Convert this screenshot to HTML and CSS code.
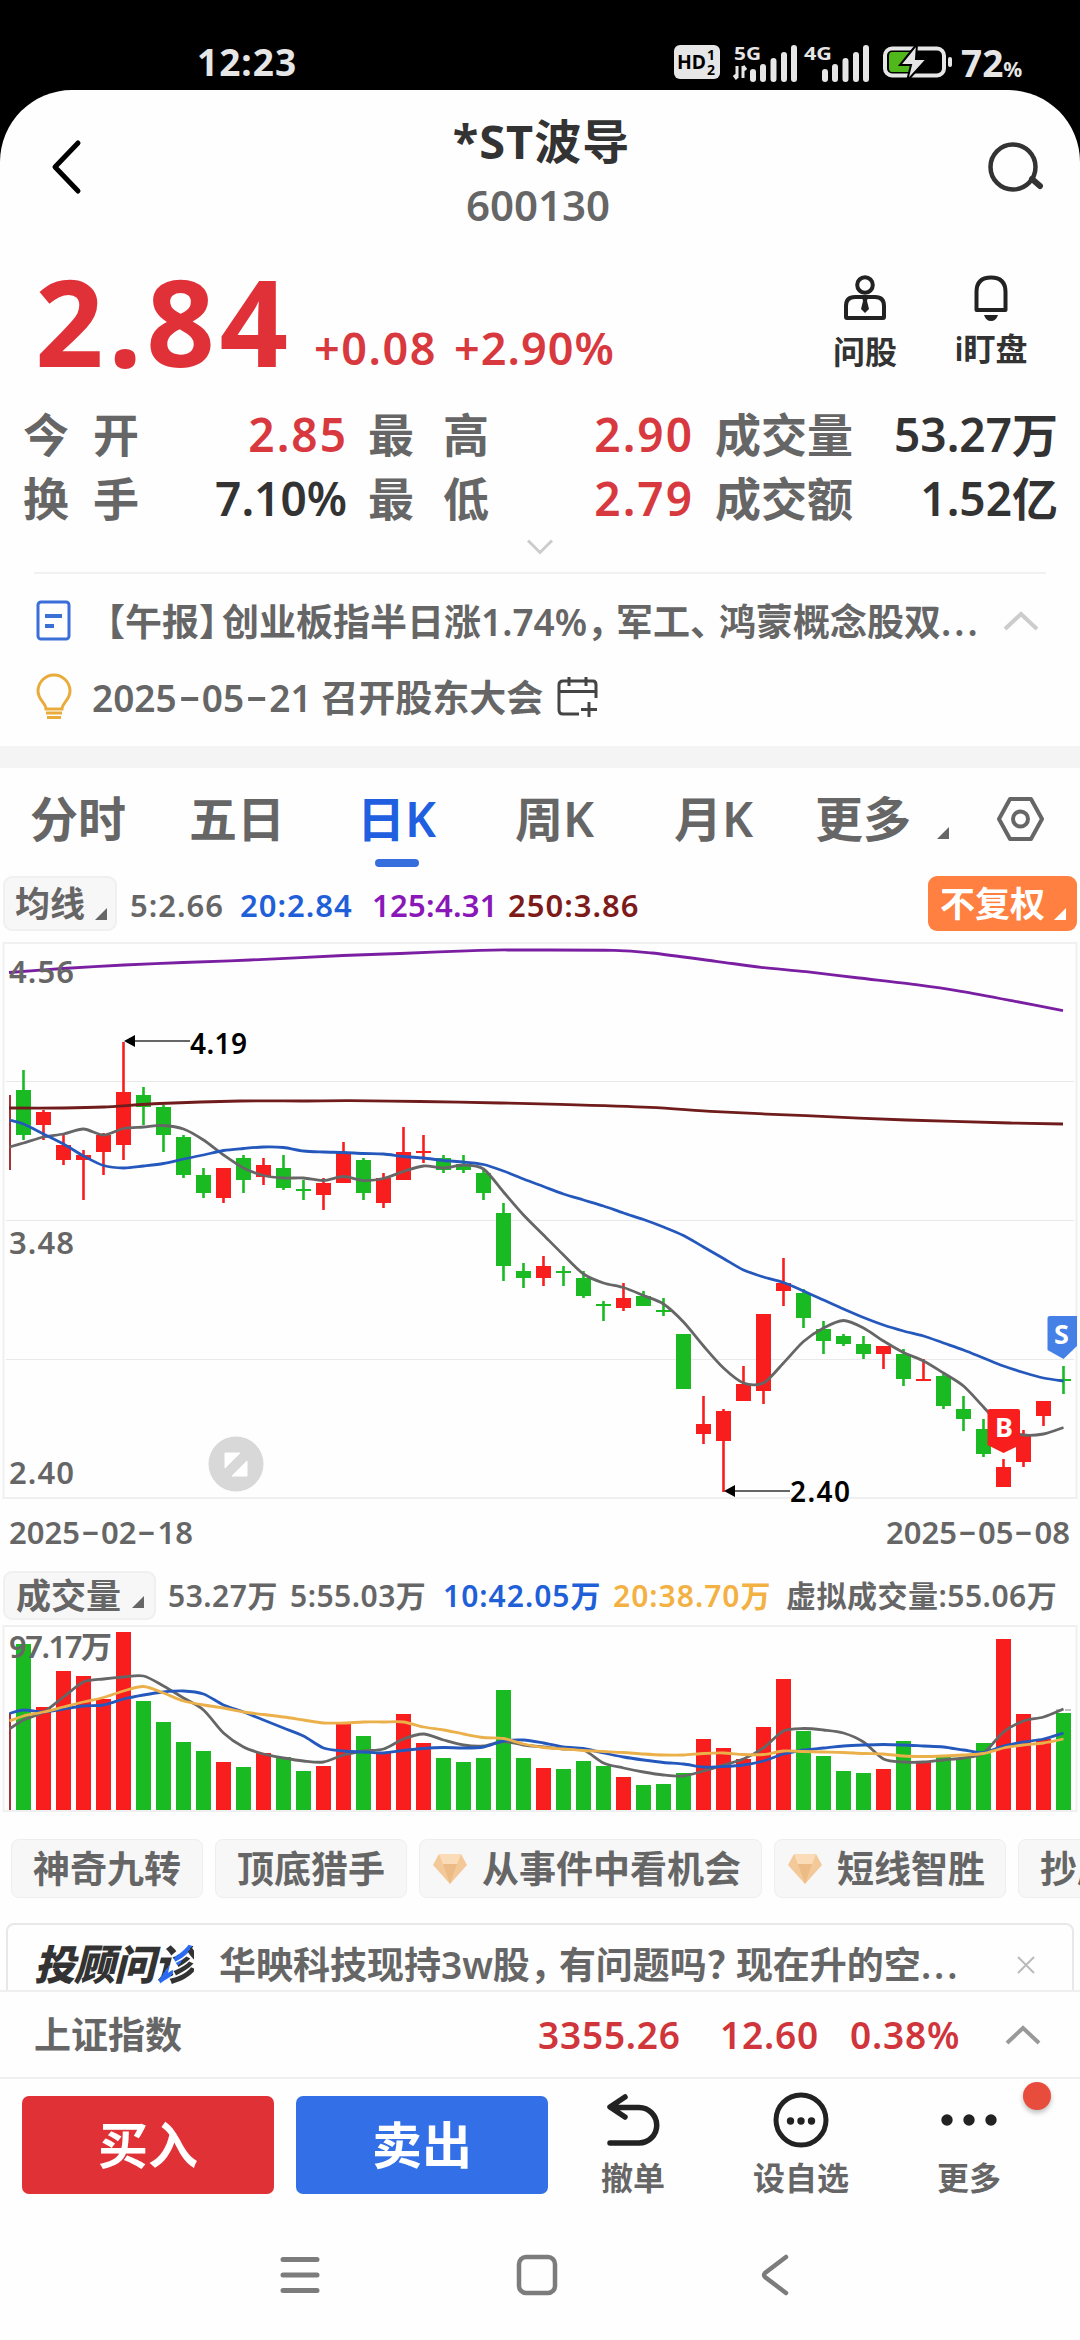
FILE: index.html
```html
<!DOCTYPE html>
<html lang="zh-CN">
<head>
    <meta charset="UTF-8">
    <meta name="viewport" content="width=device-width, initial-scale=1.0">
    <title>*ST波导 600130</title>
    <link rel="stylesheet" href="styles.css">
</head>
<body>
    <div class="status-bar">
        <span class="time">12:23</span>
        <div class="status-icons">
            <svg class="hd" width="46" height="34" viewBox="0 0 46 34">
                <rect width="46" height="34" rx="6" fill="#e6e6e6"/>
                <text x="3" y="24" font-size="20" textLength="29" lengthAdjust="spacingAndGlyphs">HD</text>
                <text x="33" y="15" font-size="14">1</text>
                <text x="33" y="30" font-size="14">2</text>
            </svg>
            <svg class="signal" width="66" height="36" viewBox="0 0 66 36">
                <text x="0" y="16" font-size="18" textLength="27" lengthAdjust="spacingAndGlyphs">5G</text>
                <path d="M3 22v12M0 31l3 4M9 34V22M12 26l-3-4" stroke="#e6e6e6" stroke-width="3" fill="none"/>
                <path d="M19 35v-7M29 35V23M39.500 35V17M50 35V11M60 35V4" stroke="#e6e6e6" stroke-width="6" stroke-linecap="round"/>
            </svg>
            <svg class="signal second" width="66" height="36" viewBox="0 0 66 36">
                <text x="0" y="16" font-size="18" textLength="28" lengthAdjust="spacingAndGlyphs">4G</text>
                <path d="M21 35v-7M31 35V23M41.500 35V17M52 35V11M62 35V4" stroke="#e6e6e6" stroke-width="6" stroke-linecap="round"/>
            </svg>
            <svg class="battery" width="70" height="34" viewBox="0 0 70 34">
                <rect x="2" y="3.500" width="59" height="27" rx="7" fill="none" stroke="#e6e6e6" stroke-width="4"/>
                <path d="M9 7h21v20H9q-3 0-3-4V11q0-4 3-4z" fill="#51b81c"/>
                <rect x="65" y="12" width="4" height="10" rx="2" fill="#e6e6e6"/>
                <path d="M34 -1L17 20h11l-4 16L44 14H33z" fill="#e6e6e6" stroke="#000" stroke-width="2"/>
            </svg>
            <span class="percent">72<small>%</small></span>
        </div>
    </div>

    <main class="page">
        <header class="header">
            <svg width="30" height="56" viewBox="0 0 30 56"><path d="M27 4L4 28l23 24" fill="none" stroke="#000" stroke-width="5" stroke-linecap="round" stroke-linejoin="round"/></svg>
            <div class="title">
                <h1>*ST波导</h1>
                <p>600130</p>
            </div>
            <svg width="58" height="56" viewBox="0 0 58 56"><circle cx="26" cy="28" r="22.500" fill="none" stroke="#333" stroke-width="4.500"/><path d="M45 40l8 7" stroke="#333" stroke-width="6" stroke-linecap="round"/></svg>
        </header>

        <section class="quote">
            <span class="price">2.84</span>
            <span class="change">+0.08</span>
            <span class="change rate">+2.90%</span>
            <div class="quote-tools">
                <div class="tool">
                    <svg width="44" height="46" viewBox="0 0 44 46" fill="none" stroke="#222" stroke-width="4">
                        <circle cx="22" cy="10" r="7.800"/>
                        <path d="M3 42V31q0-9 9-9h20q9 0 9 9v11q0 1-1 1H4q-1 0-1-1z"/>
                        <path d="M19 22h6l-1 4 2 8-4 4-4-4 2-8z" fill="#222" stroke="none"/>
                    </svg>
                    <span>问股</span>
                </div>
                <div class="tool tool-bell">
                    <svg width="44" height="46" viewBox="0 0 44 46" fill="none" stroke="#222" stroke-width="4">
                        <path d="M7.500 35V17q0-14.500 14.500-14.500T36.500 17v18z" stroke-linejoin="round"/>
                        <path d="M15 40h14q-2 6-7 6t-7-6z" fill="#222" stroke="none"/>
                    </svg>
                    <span>i盯盘</span>
                </div>
            </div>
        </section>

        <section class="stats">
            <div class="label"><i>今</i><i>开</i></div><b class="up">2.85</b>
            <div class="label"><i>最</i><i>高</i></div><b class="up">2.90</b>
            <div class="label"><i>成</i><i>交</i><i>量</i></div><b>53.27万</b>
            <div class="label"><i>换</i><i>手</i></div><b>7.10%</b>
            <div class="label"><i>最</i><i>低</i></div><b class="up">2.79</b>
            <div class="label"><i>成</i><i>交</i><i>额</i></div><b>1.52亿</b>
        </section>
        <div class="expand">
            <svg width="28" height="18" viewBox="0 0 28 18"><path d="M2 2.500l12 12 12-12" fill="none" stroke="#ccc" stroke-width="3"/></svg>
        </div>

        <section class="news">
            <div class="news-row">
                <svg width="36" height="42" viewBox="0 0 36 42" fill="none" stroke="#3a6fd8" stroke-width="3"><rect x="2" y="2" width="31" height="37" rx="3"/><path d="M9 16h17M9 26h9" stroke-width="4"/></svg>
                <p class="headline">【午报<span class="tight bracket">】</span>创业板指半日涨1.74%<span class="tight">，</span>军工<span class="tight">、</span>鸿蒙概念股双<span class="dots">...</span></p>
                <svg class="up-arrow" width="36" height="22" viewBox="0 0 36 22"><path d="M2 19L18 4l16 15" fill="none" stroke="#ccc" stroke-width="4"/></svg>
            </div>
            <div class="news-row">
                <svg width="36" height="46" viewBox="0 0 36 46" fill="none" stroke="#e9ac3c" stroke-width="3"><path d="M10 35c0-6-8-9-8-18a16 16 0 0 1 32 0c0 9-8 12-8 18z"/><path d="M10 39h16M11 43.500h14"/></svg>
                <p class="event">2025<i class="dash">-</i>05<i class="dash">-</i>21 召开股东大会</p>
                <svg width="42" height="42" viewBox="0 0 42 42" fill="none" stroke="#444" stroke-width="3"><path d="M22 38H6q-4 0-4-4V9q0-4 4-4h30q3 0 3 4v13M2 15.500h37M12 1v9M29 1v9M32 26v15M24 33.500h16"/></svg>
            </div>
        </section>

        <nav class="tabs">
            <span>分时</span>
            <span>五日</span>
            <span class="active">日K</span>
            <span>周K</span>
            <span>月K</span>
            <span>更多</span>
            <em class="corner"></em>
            <svg width="50" height="46" viewBox="0 0 50 46" fill="none" stroke="#666" stroke-width="4"><path d="M14 3h21l11 20-11 20H14L3 23z" stroke-linejoin="round"/><circle cx="24.500" cy="23" r="7.500"/></svg>
        </nav>

        <div class="legend ma-legend">
            <span class="chip">均线<em class="corner"></em></span>
            <span>5:2.66</span>
            <span class="blue">20:2.84</span>
            <span class="purple">125:4.31</span>
            <span class="brown">250:3.86</span>
            <span class="adjust">不复权<em class="corner"></em></span>
        </div>

        <div class="chart-wrap">
            <svg id="kline" class="chart" width="1080" height="570" viewBox="0 0 1080 570"></svg>
            <svg class="zoom-btn" width="56" height="56" viewBox="0 0 56 56"><circle cx="28" cy="28" r="27.500" fill="#d8d8d8"/><path d="M17 17h15L17 32zM39 25v15H24z" fill="#fff" stroke="#fff" stroke-linejoin="round"/></svg>
        </div>
        <div class="dates">
            <span>2025<i class="dash">-</i>02<i class="dash">-</i>18</span>
            <span>2025<i class="dash">-</i>05<i class="dash">-</i>08</span>
        </div>

        <div class="legend vol-legend">
            <span class="chip">成交量<em class="corner"></em></span>
            <span>53.27万</span>
            <span>5:55.03万</span>
            <span class="blue">10:42.05万</span>
            <span class="yellow">20:38.70万</span>
            <span>虚拟成交量:55.06万</span>
        </div>
        <svg id="volume" class="chart" width="1080" height="194" viewBox="0 70 1080 194"></svg>

        <div class="strategies">
            <span>神奇九转</span>
            <span>顶底猎手</span>
            <span class="vip"><svg width="34" height="30" viewBox="0 0 34 30"><path d="M6 0h22l6 11-17 19L0 11z" fill="#f4c99a"/><path d="M6 0h22l-4 10H10z" fill="#fbdcb8"/><path d="M10 10h14l-7 20z" fill="#edbb86"/></svg>从事件中看机会</span>
            <span class="vip"><svg width="34" height="30" viewBox="0 0 34 30"><path d="M6 0h22l6 11-17 19L0 11z" fill="#f4c99a"/><path d="M6 0h22l-4 10H10z" fill="#fbdcb8"/><path d="M10 10h14l-7 20z" fill="#edbb86"/></svg>短线智胜</span>
            <span>抄底</span>
        </div>

        <div class="advisor">
            <div class="advisor-card">
                <strong>投顾问<span>诊</span></strong>
                <p>华映科技现持3w股<span class="tight">，</span>有问题吗<span class="tight">？</span>现在升的空<span class="dots">...</span></p>
                <svg width="20" height="20" viewBox="0 0 20 20"><path d="M2 2l16 16M18 2L2 18" stroke="#bbb" stroke-width="2"/></svg>
            </div>
        </div>

        <div class="index-row">
            <span class="name">上证指数</span>
            <b class="points">3355.26</b><b class="diff">12.60</b><b>0.38%</b>
            <svg width="36" height="22" viewBox="0 0 36 22"><path d="M2 19L18 4l16 15" fill="none" stroke="#999" stroke-width="4"/></svg>
        </div>

        <footer class="actions">
            <button class="buy">买入</button>
            <button class="sell">卖出</button>
            <div class="action">
                <svg width="56" height="56" viewBox="0 0 56 56" fill="none" stroke="#222" stroke-width="5.500" stroke-linecap="round" stroke-linejoin="round"><path d="M20 5L5 15l15 10M6 15.500h28a17.500 17.500 0 0 1 0 35.500H5"/></svg>
                <span>撤单</span>
            </div>
            <div class="action">
                <svg width="56" height="56" viewBox="0 0 56 56"><circle cx="28" cy="28" r="25" fill="none" stroke="#222" stroke-width="5"/><g fill="#222"><circle cx="17.500" cy="29" r="3.700"/><circle cx="28" cy="29" r="3.700"/><circle cx="38.500" cy="29" r="3.700"/></g></svg>
                <span>设自选</span>
            </div>
            <div class="action">
                <svg width="56" height="56" viewBox="0 0 56 56" fill="#222"><circle cx="6" cy="28" r="5.700"/><circle cx="28" cy="28" r="5.700"/><circle cx="50" cy="28" r="5.700"/></svg>
                <span>更多</span>
                <em class="badge"></em>
            </div>
        </footer>

        <div class="nav-bar">
            <svg width="40" height="44" viewBox="0 0 40 44"><path d="M3 6.500h34M3 22h34M3 37.500h34" stroke="#7c7c7c" stroke-width="5" stroke-linecap="round"/></svg>
            <svg width="44" height="44" viewBox="0 0 44 44"><rect x="4" y="4" width="36" height="36" rx="7" fill="none" stroke="#7c7c7c" stroke-width="4.500"/></svg>
            <svg width="30" height="44" viewBox="0 0 30 44"><path d="M26 4L5 20q-2 2 0 4l21 16" fill="none" stroke="#7c7c7c" stroke-width="4.500" stroke-linecap="round"/></svg>
        </div>
    </main>
    <script src="chart.js"></script>
</body>
</html>
```
FILE: styles.css
```css
* {
    box-sizing: border-box;
    margin: 0;
    padding: 0;
}
body {
    width: 1080px;
    height: 2340px;
    overflow: hidden;
    background: #000;
    color: #666;
    font-family: "Noto Sans", "Noto Sans CJK SC", sans-serif;
    font-weight: 600;
    font-size: 37px;
    line-height: 1;
}
svg {
    display: block;
    flex: none;
    overflow: visible;
}
i, em {
    font-style: normal;
}
.status-bar {
    display: flex;
    justify-content: space-between;
    height: 90px;
    padding: 34px 57px 0 197px;
    color: #e6e6e6;
}
.time {
    height: 56px;
    line-height: 56px;
    font-size: 37px;
    font-weight: 700;
    letter-spacing: 1px;
}
.status-icons {
    display: flex;
    align-items: center;
    height: 56px;
}
.status-icons text {
    font-weight: 700;
}
.signal {
    margin-left: 14px;
    fill: #e6e6e6;
}
.signal.second {
    margin-left: 4px;
}
.battery {
    margin-left: 13px;
}
.percent {
    width: 62px;
    margin-left: 8px;
    font-size: 37px;
    font-weight: 700;
    white-space: nowrap;
}
.percent small {
    font-size: 21px;
}
.page {
    height: 2250px;
    background: #fefefe;
    border-radius: 72px 72px 0 0;
}
.header {
    display: flex;
    justify-content: space-between;
    height: 154px;
    padding: 24px 35px 0 51px;
}
.header > svg {
    margin-top: 25px;
}
.title {
    text-align: center;
    margin-left: 8px;
}
.title h1 {
    height: 54px;
    line-height: 54px;
    margin-left: 7px;
    font-size: 47px;
    letter-spacing: 1px;
    color: #333;
}
.title p {
    height: 50px;
    line-height: 50px;
    margin-top: 12px;
    font-size: 42px;
}
.quote {
    display: flex;
    align-items: baseline;
    height: 158px;
    padding-left: 35px;
    color: #d8393e;
}
.price {
    width: 279px;
    font-size: 120px;
    line-height: 153px;
    font-weight: 700;
    letter-spacing: 4.5px;
    color: #e03138;
}
.change {
    position: relative;
    top: -2px;
    width: 140px;
    font-size: 45px;
    letter-spacing: 1.5px;
}
.change.rate {
    width: 379px;
    letter-spacing: 1px;
}
.quote-tools {
    display: flex;
    align-self: flex-start;
    gap: 56px;
    padding-top: 31px;
    color: #333;
    font-size: 32px;
}
.tool {
    display: flex;
    flex-direction: column;
    align-items: center;
    gap: 15px;
    width: 64px;
}
.tool-bell {
    width: 76px;
    gap: 12px;
}
.stats {
    display: grid;
    grid-template-columns: 116px 208px 142px 204px 160px 205px;
    grid-auto-rows: 64px;
    align-items: center;
    padding: 0 23px;
    font-size: 46px;
}
.stats .label {
    display: flex;
    justify-content: space-between;
}
.stats .label:nth-child(6n+3) {
    padding-left: 21px;
}
.stats .label:nth-child(6n+5) {
    padding-left: 22px;
}
.stats b {
    font-weight: 600;
    text-align: right;
    color: #333;
    white-space: nowrap;
}
.stats .up {
    margin-right: -1px;
    letter-spacing: 2px;
    color: #d8393e;
}
.expand {
    display: flex;
    justify-content: center;
    height: 44px;
    padding-top: 8px;
    margin: 0 34px;
    border-bottom: 2px solid #f1f1f1;
}
.news {
    height: 194px;
    padding: 9px 40px 0 36px;
    border-bottom: 22px solid #f4f4f4;
}
.news-row {
    display: flex;
    align-items: center;
    height: 76px;
    white-space: nowrap;
}
.headline {
    width: 885px;
    margin-left: 16px;
}
.tight {
    letter-spacing: -8px;
}
.bracket {
    letter-spacing: -14px;
}
.dots {
    letter-spacing: 3px;
}
.dash {
    display: inline-block;
    width: 0.68em;
    text-align: center;
    transform: translateY(-0.07em) scaleX(1.8);
}
.event {
    margin: 0 14px 0 20px;
}
.up-arrow {
    margin-left: 30px;
}
.tabs {
    display: flex;
    align-items: center;
    height: 102px;
    padding-left: 30px;
    font-size: 48px;
}
.tabs span {
    position: relative;
    width: 159px;
}
.tabs span:nth-child(2) {
    width: 168px;
}
.tabs span:nth-child(3) {
    width: 158px;
}
.tabs span:nth-child(5) {
    width: 141px;
}
.tabs span:nth-child(6) {
    width: 122px;
}
.tabs .active {
    color: #1f5fe0;
}
.tabs .active::after {
    content: "";
    position: absolute;
    left: 18px;
    top: 64px;
    width: 44px;
    height: 8px;
    border-radius: 4px;
    background: #366ede;
}
.corner {
    width: 0;
    height: 0;
    border-left: 12px solid transparent;
    border-bottom: 12px solid currentColor;
}
.tabs .corner {
    margin: 28px 47px 0 0;
}
.legend {
    display: flex;
    align-items: center;
    padding: 0 3px;
    font-size: 30px;
    letter-spacing: 0.5px;
    white-space: nowrap;
}
.chip, .adjust {
    display: flex;
    align-items: center;
    justify-content: space-between;
    border-radius: 9px;
    letter-spacing: 0;
}
.chip {
    background: #f7f7f7;
    border: 2px solid #f0f0f0;
    font-size: 35px;
}
.chip .corner, .adjust .corner {
    margin-top: 20px;
}
.ma-legend {
    height: 67px;
    align-items: flex-start;
    line-height: 58px;
    padding-top: 6px;
    font-size: 31px;
    letter-spacing: 1px;
}
.ma-legend span {
    width: 110px;
}
.ma-legend .blue {
    width: 132px;
}
.ma-legend .purple {
    width: 136px;
    letter-spacing: 0.3px;
}
.ma-legend .chip {
    width: 114px;
    height: 55px;
    padding: 0 8px 0 10px;
    margin-right: 13px;
    letter-spacing: 0;
}
.ma-legend .adjust {
    width: 149px;
    height: 55px;
    margin: 0 0 0 auto;
    padding: 0 11px 0 12px;
    background: #ff8040;
    color: #fff;
    font-size: 35px;
    letter-spacing: 0;
}
.blue {
    color: #1f5fd8;
}
.purple {
    color: #8a17b8;
}
.brown {
    color: #7d1a1a;
}
.yellow {
    color: #f3b144;
}
.chart-wrap {
    position: relative;
    height: 570px;
    margin-top: 3px;
}
.chart text {
    font-size: 31px;
    fill: #666;
}
.chart .mark {
    fill: #000;
    font-size: 28px;
}
.chart .flag {
    fill: #fff;
    font-size: 27px;
    font-weight: 700;
}
.frame {
    fill: none;
    stroke: #f0f0f0;
    stroke-width: 2;
}
.grid {
    stroke: #e9e9e9;
    stroke-width: 1;
}
.red {
    fill: #f91e1e;
}
.green {
    fill: #1abb22;
}
.line {
    fill: none;
    stroke-width: 2.8;
    stroke-linejoin: round;
}
.zoom-btn {
    position: absolute;
    left: 208px;
    top: 496px;
}
.dates {
    display: flex;
    justify-content: space-between;
    height: 61px;
    padding: 7px 10px 0 9px;
    font-size: 31px;
}
.vol-legend {
    height: 49px;
}
.vol-legend span {
    width: 122px;
}
.vol-legend span:nth-child(3) {
    width: 153px;
}
.vol-legend .blue {
    width: 170px;
    letter-spacing: 1px;
}
.vol-legend .yellow {
    width: 173px;
    letter-spacing: 1px;
}
.vol-legend .chip {
    width: 153px;
    height: 49px;
    padding: 0 10px 0 11px;
    margin-right: 12px;
}
.vol-legend .chip .corner {
    margin-top: 12px;
}
.strategies {
    display: flex;
    gap: 12px;
    height: 84px;
    padding: 25px 0 0 11px;
    overflow: hidden;
    white-space: nowrap;
}
.strategies span {
    display: flex;
    align-items: center;
    flex: none;
    height: 59px;
    padding: 0 21px;
    background: #f7f7f7;
    border: 1px solid #eee;
    border-radius: 8px;
}
.strategies .vip {
    gap: 15px;
    padding: 0 20px 0 13px;
}
.advisor {
    height: 92px;
    padding: 25px 6px 0;
    overflow: hidden;
}
.advisor-card {
    display: flex;
    align-items: center;
    height: 83px;
    padding: 0 36px 0 26px;
    border: 2px solid #e8e8e8;
    border-radius: 8px;
    white-space: nowrap;
}
.advisor-card strong {
    width: 185px;
    font-size: 41px;
    font-weight: 900;
    font-style: italic;
    letter-spacing: -1px;
    color: #333;
}
.advisor-card strong span {
    background: linear-gradient(125deg, #333 45%, #2a6af0 45%, #2a6af0 57%, #333 57%);
    -webkit-background-clip: text;
    background-clip: text;
    color: transparent;
}
.advisor-card svg {
    margin-left: auto;
}
.index-row {
    display: flex;
    align-items: center;
    height: 87px;
    padding: 0 39px 0 34px;
    border-top: 2px solid #efefef;
}
.index-row .name {
    width: 504px;
}
.index-row b {
    font-weight: 600;
    letter-spacing: 0.8px;
    color: #cf353b;
}
.index-row .points {
    width: 182px;
}
.index-row .diff {
    width: 130px;
}
.index-row svg {
    margin-left: auto;
}
.actions {
    display: flex;
    height: 119px;
    padding: 17px 0 0 22px;
    border-top: 2px solid #efefef;
}
.actions button {
    width: 252px;
    height: 98px;
    margin-right: 22px;
    border: none;
    border-radius: 7px;
    color: #fff;
    font: inherit;
    font-size: 50px;
    font-weight: 700;
}
.buy {
    background: #e03136;
}
.sell {
    background: #336fe6;
}
.action {
    position: relative;
    display: flex;
    flex-direction: column;
    align-items: center;
    gap: 14px;
    width: 168px;
    font-size: 32px;
    margin-top: -4px;
}
.action:nth-child(3) {
    margin-left: -21px;
}
.badge {
    position: absolute;
    right: 2px;
    top: -10px;
    width: 28px;
    height: 28px;
    border-radius: 50%;
    background: #e74c3c;
    box-shadow: 0 3px 5px rgba(0, 0, 0, 0.25);
}
.nav-bar {
    display: flex;
    height: 143px;
    padding: 57px 0 0 280px;
}
.nav-bar svg:nth-child(2) {
    margin: 0 201px 0 195px;
}
```
FILE: chart.js
```js
const RED = '#f91e1e', GREEN = '#1abb22';
const x = i => 23.5 + i * 20;

// colour, high, body top, body bottom, low
const candles = [
    ['g',130,150,195,200],['r',170,172,185,200],['r',193,205,220,225],['r',210,215,220,260],['r',193,195,212,235],
    ['r',102,152,205,220],['g',147,155,167,185],['g',165,167,195,212],['g',195,197,235,238],['g',228,235,253,258],
    ['r',228,228,258,263],['g',215,218,240,253],['r',218,225,237,245],['g',215,228,248,250],['g',240,249,251,260],
    ['r',238,243,255,270],['r',202,213,243,243],['g',218,220,253,260],['r',233,238,263,268],['r',187,212,240,240],
    ['r',195,211,213,223],['g',215,218,230,233],['g',215,224,230,233],['g',230,233,253,260],['g',263,273,326,341],
    ['g',323,331,338,348],['r',316,326,338,346],['g',326,331,333,346],['g',331,338,356,358],['g',361,364,366,381],
    ['r',343,358,368,371],['g',351,356,366,366],['g',358,370,372,376],['g',394,394,449,449],['r',456,484,494,504],
    ['r',469,471,501,552],['r',426,444,461,461],['r',374,374,451,464],['r',318,343,351,366],['g',349,353,378,388],
    ['g',381,389,401,414],['g',394,396,404,406],['g',396,404,414,419],['r',406,406,414,429],['g',409,414,439,446],
    ['r',419,439,441,441],['g',434,436,466,469],['g',456,469,479,491],['g',479,489,514,517],['r',519,527,547,547],
    ['r',490,495,522,527],['r',461,461,476,486],['g',426,439,441,454]
];
const volumes = [94,157,121,126,149,82,151,172,192,201,212,217,203,207,221,216,173,186,203,164,193,208,212,208,140,208,218,
    219,211,216,227,235,234,223,189,198,209,177,129,181,206,221,223,219,191,212,207,208,193,89,164,189,163];

const ma5 = [207,203,197,194,189,195,188.5,187,185.5,189,200,215,228,235.5,238,238,240.5,236.5,240.5,238.5,231.5,226,228,225,229,
    252,275,295,315,334,343,347.5,355.5,364,382,406,428,443,443,423,401.5,388,380.5,388,401,412.5,421,433,446,467,488,495,494,487.5];
const ma20 = [180,184,194,204,216,225.5,228,226,223.5,219,215,210.5,208.5,207,207.5,211,212,212.5,213.5,214,216.5,218,220.5,222,
    224.5,231,239,246.5,254,260,266,273,279.5,287,295.5,307,318.5,330,337,342.5,351,360,369,377.5,385,391,396,403,410,418,426,432.5,438,441];
const ma125 = [[9,32.5],[63,28.5],[124,25],[183,22.5],[250,20],[343,15.5],[400,13.5],[480,10.3],[520,10],[614,10.3],[652,13],
    [716,21.3],[761,27.3],[806,31.7],[859,38],[916,44.7],[961,51.3],[1015,61.3],[1063,70.7]];
const ma250 = [[9,168],[63,168],[104,167],[160,163.5],[240,161],[303,161],[350,160.7],[420,161.5],[500,163],[560,164.3],[650,167.3],
    [716,171.7],[806,175.7],[906,180],[1010,183],[1063,184]];

const vol5 = [179,170,162,147,132,129,127,126,136,148,160,183,197,204,208,211,212,205,201,199,189,184,190,195,196,191.5,195,197,
    199,200,213,218,222,225,226,221,215,209,198,181,178.5,180,183,192,209,212,212,210,208,203,182,171,167,159];
const vol10 = [163.5,160,162,159,156,155,149,145,142,141,144,155,162,170,178,186,198,201,202,203,200.5,198.5,197.5,198,197,191,190,
    193,197,198.5,203,207,210,212.5,214,217,216.5,215,211,204,200,198,196,195,194.5,195,196,197,200,202.5,196,192,189,183];
const vol20 = [171,166,162,157,152,147.5,141,136.5,143,151,155,158,162,164.5,167,170,173,173,172,172,172,177,180,184,187.5,188.5,
    194,197.5,199,200.5,201.5,202.5,204,205,205,203.5,203,204.5,204.5,201,201.5,202,202.5,203.5,204,206,206.5,206,205,203.5,198,195,193,189];

// the first value belongs to the candle cut off by the left edge
const toPoints = list => list.map((y, i) => [i === 0 ? 9.5 : x(i - 1), y]);

// smooth curve through all points
function line(points, color) {
    let d = `M${points[0]}`;
    for (let i = 0; i < points.length - 1; i++) {
        const p0 = points[i - 1] || points[i], p1 = points[i], p2 = points[i + 1], p3 = points[i + 2] || p2;
        d += `C${p1[0] + (p2[0] - p0[0]) / 7},${p1[1] + (p2[1] - p0[1]) / 7} ${p2[0] - (p3[0] - p1[0]) / 7},${p2[1] - (p3[1] - p1[1]) / 7} ${p2}`;
    }
    return `<path class="line" d="${d}" stroke="${color}"/>`;
}

function drawKline() {
    let out = '<rect class="frame" x="3.500" y="3" width="1073" height="555"/>';
    [141.5, 280.5, 419.5].forEach(y => out += `<path class="grid" d="M6 ${y}H1074"/>`);
    out += '<path d="M10 155v75" stroke="#a83232" stroke-width="2"/>';
    candles.forEach(([c, high, top, bottom, low], i) => {
        const cls = c === 'r' ? 'red' : 'green';
        out += `<rect class="${cls}" x="${x(i) - 1.3}" y="${high}" width="2.6" height="${low - high}"/>`;
        out += `<rect class="${cls}" x="${x(i) - 7.5}" y="${top}" width="15" height="${bottom - top}"/>`;
    });
    out += line(toPoints(ma5), '#666') + line(toPoints(ma20), '#2458bc') + line(ma125, '#7a1fa2') + line(ma250, '#701c1c');
    out += '<text x="9" y="43" textLength="65">4.56</text><text x="9" y="314" textLength="65">3.48</text><text x="9" y="544" textLength="65">2.40</text>';
    out += '<path d="M134 101h56M734 551h56" stroke="#666" stroke-width="2"/>';
    out += '<path d="M124 101l11-6v12zM724 551l11-6v12z"/>';
    out += '<text class="mark" x="190" y="114" textLength="57">4.19</text><text class="mark" x="790" y="562" textLength="60">2.40</text>';
    out += `<path d="M990 469h28q2 0 2 2v34l-16.500 8-16-8v-34q0-2 2.500-2z" fill="${RED}"/><text class="flag" x="995" y="497">B</text>`;
    out += '<path d="M1050 376h27v30l-13.500 13-16-9v-32q0-2 2.500-2z" fill="#4580e6"/><text class="flag" x="1054" y="404">S</text>';
    document.getElementById('kline').innerHTML = out;
}

function drawVolume() {
    let out = '<rect class="frame" x="3.500" y="76" width="1073" height="185"/>';
    out += '<path d="M10 163v97" stroke="#a83232" stroke-width="2"/>';
    volumes.forEach((top, i) => {
        out += `<rect x="${x(i) - 7.5}" y="${top}" width="15" height="${260 - top}" fill="${candles[i][0] === 'r' ? RED : GREEN}"/>`;
    });
    out += '<path d="M1056 160h15" stroke="#888" stroke-dasharray="6 3"/>';
    out += '<text x="9" y="108" textLength="103">97.17万</text>';
    out += line(toPoints(vol5), '#666') + line(toPoints(vol10), '#2458bc') + line(toPoints(vol20), '#ebb04a');
    document.getElementById('volume').innerHTML = out;
}

drawKline();
drawVolume();
```
